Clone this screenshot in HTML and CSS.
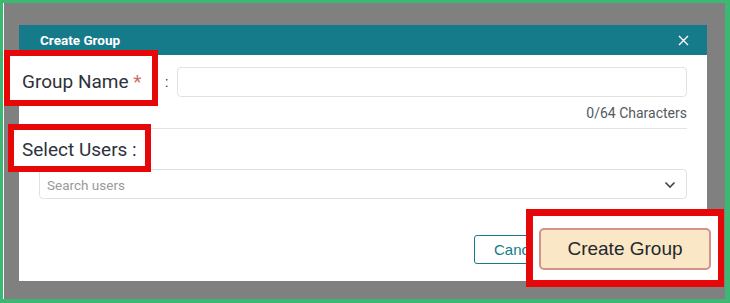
FILE: index.html
```html
<!DOCTYPE html>
<html lang="en">
  <head>
    <meta charset="UTF-8" />
    <meta name="viewport" content="width=device-width, initial-scale=1.0" />
    <title>Create Group</title>
    <link rel="stylesheet" href="styles.css">
  </head>
  <body>
    <!-- dimmed page behind the modal -->
    <div class="screen">
      <div class="modal">
        <div class="modal-header">
          <span class="modal-title">Create Group</span>
          <svg class="close" width="11" height="11" viewBox="0 0 11 11">
            <path d="M1 1 L10 10 M10 1 L1 10" stroke="#fff" stroke-width="1.4" fill="none" />
          </svg>
        </div>
        <div class="modal-body">
          <div class="row-name">
            <span class="label-space"></span>
            <span class="colon">:</span>
            <input type="text" class="text-input" value="" />
          </div>
          <div class="counter">0/64 Characters</div>
          <div class="divider"></div>
          <div class="users-label"></div>
          <div class="select-box">
            <span class="placeholder">Search users</span>
            <svg class="chevron" width="12" height="8" viewBox="0 0 12 8">
              <path d="M1.5 1.5 L6 6 L10.5 1.5" stroke="#444" stroke-width="1.6" fill="none" />
            </svg>
          </div>
          <div class="modal-footer">
            <button class="btn-cancel">Cancel</button>
            <button class="btn-create"></button>
          </div>
        </div>
      </div>
    </div>

    <!-- red annotation boxes laid over the screenshot -->
    <div class="mark mark-name">
      <span class="big-label">Group Name <span class="star">*</span></span>
    </div>
    <div class="mark mark-users">
      <span class="big-label">Select Users :</span>
    </div>
    <div class="mark mark-create">
      <button class="big-button">Create Group</button>
    </div>
  </body>
</html>
```

FILE: styles.css
```css
body {
  margin: 0;
  position: relative;
  font-family: Roboto, "Liberation Sans", sans-serif;
}
.screen {
  height: 303px;
  box-sizing: border-box;
  background-color: #808080;
  border-top: 3px solid #3cb873;
  border-left: 3px solid #3cb873;
  border-right: 5px solid #3cb873;
  border-bottom: 4px solid #3cb873;
  box-shadow: inset 1px 0 0 #ffffff;
  padding: 22px 18px 18px 16px;
}
.modal {
  background-color: #ffffff;
  height: 256px;
}
.modal-header {
  height: 30px;
  background-color: #157a8a;
  display: flex;
  align-items: center;
  justify-content: space-between;
  padding: 0 18px 0 21px;
}
.modal-title {
  color: #ffffff;
  font-size: 13.5px;
  font-weight: 700;
}
.modal-body {
  padding: 12px 20px 0 20px;
}
.row-name {
  display: flex;
  align-items: center;
}
.label-space {
  width: 126px;
}
.colon {
  color: #333;
  font-size: 14px;
  width: 12px;
}
.text-input {
  flex: 1;
  height: 30px;
  box-sizing: border-box;
  border: 1px solid #e2e2e2;
  border-radius: 4px;
  outline: none;
}
.counter {
  text-align: right;
  font-size: 14px;
  color: #555a60;
  margin-top: 7px;
  line-height: 18px;
}
.divider {
  height: 1px;
  background-color: #e3e3e3;
  margin-top: 6px;
}
.users-label {
  height: 40px;
}
.select-box {
  height: 30px;
  box-sizing: border-box;
  border: 1px solid #e2e2e2;
  border-radius: 4px;
  display: flex;
  align-items: center;
  justify-content: space-between;
  padding: 2px 10px 0 7px;
}
.placeholder {
  font-size: 13.5px;
  color: #9a9a9a;
}
.modal-footer {
  display: flex;
  justify-content: flex-end;
  gap: 8px;
  margin-top: 36px;
}
.btn-cancel,
.btn-create {
  height: 29px;
  border-radius: 3px;
  font-family: "Liberation Sans", Arial, sans-serif;
  font-size: 15px;
}
.btn-cancel {
  width: 80px;
  background-color: #ffffff;
  border: 1px solid #157a8a;
  color: #157a8a;
  text-align: left;
  padding-left: 19px;
}
.btn-create {
  width: 125px;
  background-color: #157a8a;
  border: 1px solid #157a8a;
}

/* annotations */
.mark {
  position: absolute;
  box-sizing: border-box;
  border: 6px solid #e60808;
  background-color: #ffffff;
  display: flex;
  align-items: center;
}
.mark-name {
  left: 4px;
  top: 50px;
  width: 154px;
  height: 56px;
  padding: 6px 0 0 12px;
}
.mark-users {
  left: 8px;
  top: 124px;
  width: 143px;
  height: 48px;
  padding: 2px 0 0 8px;
}
.mark-create {
  left: 526px;
  top: 209px;
  width: 198px;
  height: 78px;
  border-width: 7px 6px 7px 7px;
  padding: 5px 7px 3px 6px;
}
.big-label {
  font-size: 19px;
  color: #2e323a;
  white-space: nowrap;
}
.star {
  color: #c8705f;
}
.big-button {
  width: 172px;
  height: 42px;
  background-color: #fae7c6;
  border: 2px solid #d4928a;
  border-radius: 5px;
  font-family: "Liberation Sans", Arial, sans-serif;
  font-size: 19px;
  color: #24272c;
}
```
